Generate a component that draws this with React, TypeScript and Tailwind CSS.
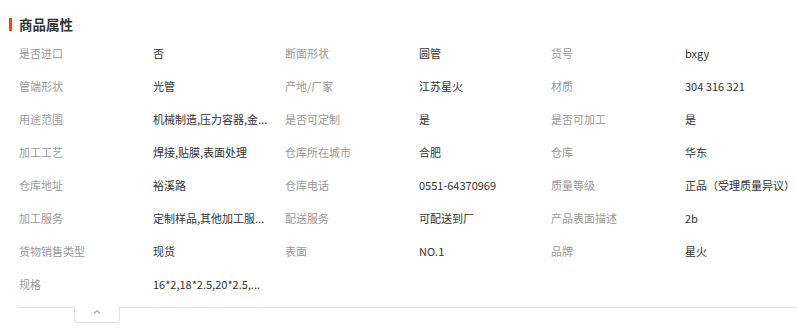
const rows: [string, string][][] = [
  [["是否进口", "否"], ["断面形状", "圆管"], ["货号", "bxgy"]],
  [["管端形状", "光管"], ["产地/厂家", "江苏星火"], ["材质", "304 316 321"]],
  [["用途范围", "机械制造,压力容器,金..."], ["是否可定制", "是"], ["是否可加工", "是"]],
  [["加工工艺", "焊接,贴膜,表面处理"], ["仓库所在城市", "合肥"], ["仓库", "华东"]],
  [["仓库地址", "裕溪路"], ["仓库电话", "0551-64370969"], ["质量等级", "正品（受理质量异议）"]],
  [["加工服务", "定制样品,其他加工服..."], ["配送服务", "可配送到厂"], ["产品表面描述", "2b"]],
  [["货物销售类型", "现货"], ["表面", "NO.1"], ["品牌", "星火"]],
  [["规格", "16*2,18*2.5,20*2.5,..."]],
];

const App = () => {
  return (
    <div className="w-[797px] h-[329px] bg-white overflow-hidden font-['Noto_Sans_CJK_SC','Noto_Sans',sans-serif]">
      <div className="flex items-center gap-[7px] pl-[9px] pt-[17px]">
        <span className="w-[3px] h-[13px] bg-[#ff4400]" />
        <h2 className="text-[13.5px] leading-[14px] font-bold text-[#333]">商品属性</h2>
      </div>

      <div className="pl-[19px] pt-[6px]">
        {rows.map((row, i) => (
          <div key={i} className="flex h-[33px] items-center text-[11px]">
            {row.map(([label, value]) => (
              <div key={label} className="flex w-[266px] shrink-0">
                <span className="w-[134px] shrink-0 text-[#999]">{label}</span>
                <span className="whitespace-nowrap text-[#333]">{value}</span>
              </div>
            ))}
          </div>
        ))}
      </div>

      <div className="ml-[18px] mt-[6px] border-t border-[#e5e5e5]">
        <div className="ml-[56px] -mt-px w-[46px] h-[16px] bg-white border border-t-0 border-[#e0e0e0] rounded-b-[4px] flex justify-center pt-[1px]">
          <svg width="8" height="6" viewBox="0 0 8 6" className="mt-[1px]">
            <path d="M1 4.5 L4 1.5 L7 4.5" fill="none" stroke="#aaa" strokeWidth="1.2" />
          </svg>
        </div>
      </div>
    </div>
  );
};

export default App;
